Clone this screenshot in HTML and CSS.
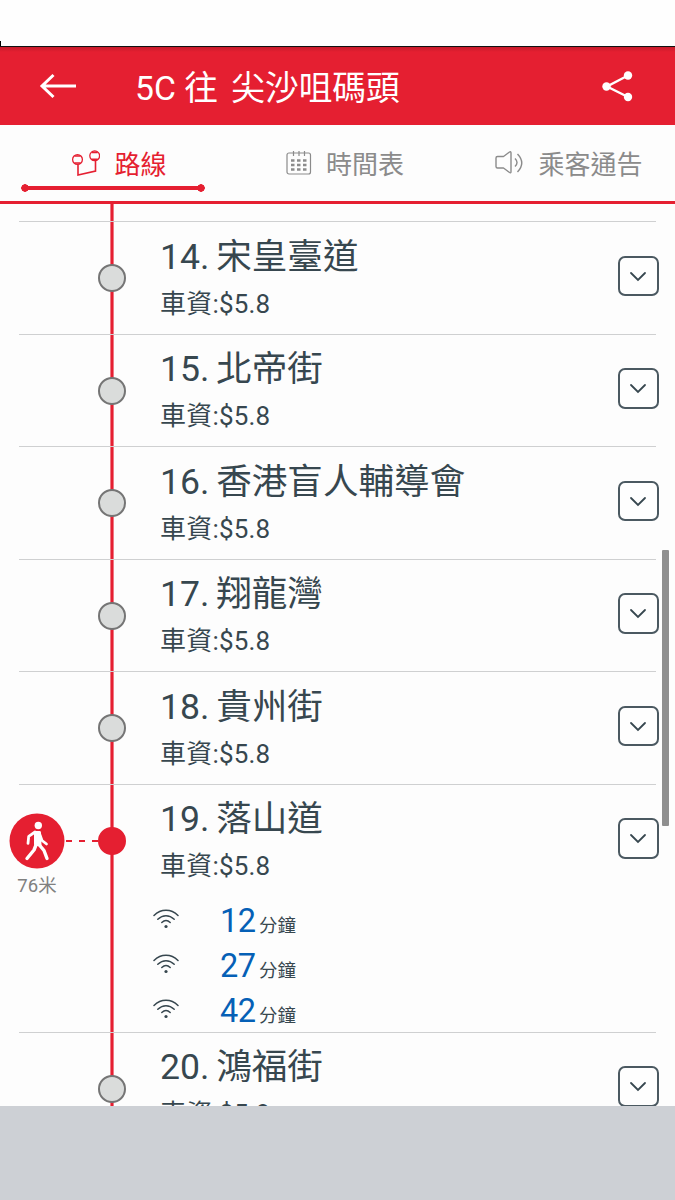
FILE: index.html
```html
<!DOCTYPE html>
<html lang="zh-HK">
  <head>
    <title>5C 往 尖沙咀碼頭</title>
    <meta charset="UTF-8">
    <meta name="viewport" content="width=device-width, initial-scale=1.0">
    <link rel="stylesheet" href="styles.css">
  </head>

  <body>

    <!-- icons used more than once -->
    <svg class="defs">
      <symbol id="chevron" viewBox="0 0 18 12">
        <path d="M2 3l7 7 7-7" fill="none" stroke="currentColor" stroke-width="1.8" stroke-linecap="round"/>
      </symbol>
      <symbol id="signal" viewBox="0 0 26 20">
        <g fill="none" stroke="currentColor" stroke-width="1.5" stroke-linecap="round">
          <path d="M1 6.500C8-.4 18-.4 25 6.500"/>
          <path d="M4.800 10.300c5-4.800 11.400-4.800 16.400 0"/>
          <path d="M8.800 13.500c2.600-2.500 5.800-2.500 8.400 0"/>
        </g>
        <circle cx="13" cy="17.500" r="1.600" fill="currentColor"/>
      </symbol>
    </svg>

    <div class="statusbar"></div>

    <header class="header">
      <svg class="back" width="38" height="26" viewBox="0 0 38 26">
        <path d="M14.500 2L3 13l11.500 11M3 13h34" fill="none" stroke="#fff" stroke-width="3"/>
      </svg>
      <h1 class="title">5C 往 <span>尖沙咀碼頭</span></h1>
      <svg class="share" width="32" height="32" viewBox="0 0 32 32">
        <path d="M26 5.500L5 16.500l21 10.500" fill="none" stroke="#fff" stroke-width="2.400"/>
        <g fill="#fff">
          <circle cx="26" cy="5.500" r="4.200"/>
          <circle cx="4.500" cy="16.500" r="4.200"/>
          <circle cx="26" cy="27" r="4.200"/>
        </g>
      </svg>
    </header>

    <nav class="tabs">
      <a class="tab active">
        <svg width="30" height="27" viewBox="0 0 30 27" fill="none" stroke="currentColor">
          <path d="M8 14.500v10.500l17.500-4V10.500" stroke-width="1.600"/>
          <circle cx="7.500" cy="9.500" r="4.900" stroke-width="1.300"/>
          <circle cx="24.700" cy="5.800" r="4.900" stroke-width="1.300"/>
          <path d="M4.500 6h6M4.500 13h6M21.700 2.300h6M21.700 9.300h6" stroke-width="1.700"/>
        </svg>
        <span>路線</span>
      </a>
      <a class="tab">
        <svg width="26" height="26" viewBox="0 0 26 26" fill="none" stroke="currentColor">
          <rect x="1" y="3" width="23.500" height="21" rx="2" stroke-width="1.200"/>
          <path d="M7.500 1v5M13 1v5M18.500 1v5" stroke-width="1.200"/>
          <path d="M5 10.500h3.500m2.500 0h3.500m2.500 0h3.500M5 15h3.500m2.500 0h3.500m2.500 0h3.500M5 19.500h3.500m2.500 0h3.500m2.500 0h3.500" stroke-width="2.500"/>
        </svg>
        <span>時間表</span>
      </a>
      <a class="tab">
        <svg width="30" height="26" viewBox="0 0 30 26" fill="none" stroke="currentColor" stroke-width="1.400" stroke-linejoin="round">
          <path d="M2 8q0-1.500 1.500-1.500h6l6-4.500q1.500-.8 1.500 1v18.500q0 2-1.500 1l-6-4.500h-6q-1.500 0-1.500-1.500z"/>
          <path d="M21 8.500q4 4 0 8M23.500 4q8.500 9 0 18"/>
        </svg>
        <span>乘客通告</span>
      </a>
    </nav>

    <main class="stops">
      <section class="stop">
        <div class="rail"><span class="dot"></span></div>
        <div class="info">
          <h2 class="name">14. 宋皇臺道</h2>
          <p class="fare">車資:$5.8</p>
        </div>
        <button class="more"><svg><use href="#chevron"/></svg></button>
      </section>

      <section class="stop">
        <div class="rail"><span class="dot"></span></div>
        <div class="info">
          <h2 class="name">15. 北帝街</h2>
          <p class="fare">車資:$5.8</p>
        </div>
        <button class="more"><svg><use href="#chevron"/></svg></button>
      </section>

      <section class="stop">
        <div class="rail"><span class="dot"></span></div>
        <div class="info">
          <h2 class="name">16. 香港盲人輔導會</h2>
          <p class="fare">車資:$5.8</p>
        </div>
        <button class="more"><svg><use href="#chevron"/></svg></button>
      </section>

      <section class="stop">
        <div class="rail"><span class="dot"></span></div>
        <div class="info">
          <h2 class="name">17. 翔龍灣</h2>
          <p class="fare">車資:$5.8</p>
        </div>
        <button class="more"><svg><use href="#chevron"/></svg></button>
      </section>

      <section class="stop">
        <div class="rail"><span class="dot"></span></div>
        <div class="info">
          <h2 class="name">18. 貴州街</h2>
          <p class="fare">車資:$5.8</p>
        </div>
        <button class="more"><svg><use href="#chevron"/></svg></button>
      </section>

      <!-- nearest stop, opened -->
      <section class="stop nearest">
        <div class="rail">
          <div class="walk">
            <svg width="56" height="56" viewBox="0 0 56 56">
              <circle cx="28" cy="28" r="27.500" fill="#e51f31"/>
              <circle cx="29.300" cy="12.500" r="3.700" fill="#fff"/>
              <path d="M26.500 19.500h4L31 32l-4.500-1z" fill="#fff" stroke="#fff" stroke-width="3" stroke-linejoin="round"/>
              <path d="M26 19l-6.300 4.300-.7 7M31 22l2 5.500 4.500 3.500" fill="none" stroke="#fff" stroke-width="2.800" stroke-linecap="round" stroke-linejoin="round"/>
              <path d="M27 32l-2 5-7 8.500M30 31.500l5 6 3 8" fill="none" stroke="#fff" stroke-width="3.400" stroke-linecap="round" stroke-linejoin="round"/>
            </svg>
            <span>76米</span>
          </div>
          <svg class="dash" width="34" height="2"><path d="M1 1h33" stroke="#e51f31" stroke-width="2" stroke-dasharray="6 7"/></svg>
          <span class="dot"></span>
        </div>
        <div class="info">
          <h2 class="name">19. 落山道</h2>
          <p class="fare">車資:$5.8</p>
          <ul class="times">
            <li><svg><use href="#signal"/></svg><b>12</b><span>分鐘</span></li>
            <li><svg><use href="#signal"/></svg><b>27</b><span>分鐘</span></li>
            <li><svg><use href="#signal"/></svg><b>42</b><span>分鐘</span></li>
          </ul>
        </div>
        <button class="more"><svg><use href="#chevron"/></svg></button>
      </section>

      <section class="stop">
        <div class="rail"><span class="dot"></span></div>
        <div class="info">
          <h2 class="name">20. 鴻福街</h2>
          <p class="fare">車資:$5.8</p>
        </div>
        <button class="more"><svg><use href="#chevron"/></svg></button>
      </section>

      <div class="scrollbar"></div>
    </main>

    <footer class="footer"></footer>

  </body>
</html>
```
FILE: styles.css
```css
* {
  box-sizing: border-box;
}

body {
  display: flex;
  flex-direction: column;
  height: 1200px;
  margin: 0;
  overflow: hidden;
  background: #fdfdfd;
  color: #37474f;
  font-family: Roboto, "Noto Sans CJK TC", sans-serif;
}

h1, h2, p, ul {
  margin: 0;
  padding: 0;
  font-weight: 400;
}

svg {
  display: block;
  flex: none;
}

.defs {
  display: none;
}

.statusbar {
  flex: none;
  height: 47px;
  background: linear-gradient(#000, #000) 0 100% / 1px 5px no-repeat #fefefe;
  border-bottom: 1px solid #111;
}

/* red title bar */
.header {
  display: flex;
  flex: none;
  align-items: center;
  height: 78px;
  padding: 0 41px 0 39px;
  background: linear-gradient(#c61b2a, #e51f31 5px);
  color: #fff;
}

.title {
  flex: 1;
  margin-left: 58px;
  padding-top: 5px;
  font-size: 33.7px;
  line-height: 78px;
  white-space: nowrap;
}

.title span {
  margin-left: 5px;
}

/* tabs */
.tabs {
  display: grid;
  grid-template-columns: 225px 225px 225px;
  flex: none;
  height: 79px;
  border-bottom: 3px solid #e51f31;
  color: #8b8b8b;
  font-size: 26px;
}

.tab {
  position: relative;
  display: flex;
  justify-content: center;
  gap: 14px;
  height: 76px;
  line-height: 80px;
  white-space: nowrap;
}

.tab svg {
  margin-top: 25px;
}

.tab:nth-child(2) {
  padding-left: 15px;
}

.tab:nth-child(3) {
  padding-left: 12px;
}

.tab.active {
  padding-left: 12px;
  color: #e51f31;
}

.active::after {
  content: "";
  position: absolute;
  left: 21px;
  bottom: 9px;
  width: 184px;
  height: 8px;
  background:
    radial-gradient(circle at 4px 4px, #e51f31 3.5px, transparent 4px),
    radial-gradient(circle at 180px 4px, #e51f31 3.5px, transparent 4px),
    linear-gradient(#e51f31, #e51f31) 4px 2px / 176px 4px no-repeat;
}

/* list of stops, the route line runs behind all of them */
.stops {
  position: relative;
  flex: 1;
  min-height: 0;
  padding: 17px 17px 0 19px;
  overflow: hidden;
  background: linear-gradient(90deg, #f07884 1px, #e51f31 1px 3px, #f07884 3px) 110px 0 / 4px 100% no-repeat;
}

.stop {
  display: grid;
  grid-template-columns: 141px 1fr 40px;
  height: 112.5px;
  background: linear-gradient(#cfd0d1, #cfd0d1) 0 0 / 637px 1px no-repeat;
}

.nearest {
  height: 248px;
}

.rail {
  position: relative;
  height: 112px;
}

.dot {
  display: block;
  width: 28px;
  height: 28px;
  margin: 43px 0 0 79px;
  border: 2px solid #757575;
  border-radius: 50%;
  background: #dadcdb;
}

.nearest .dot {
  border-color: #e51f31;
  background: #e51f31;
}

.walk {
  position: absolute;
  top: 29px;
  left: -10px;
  width: 56px;
  color: #808080;
  font-size: 18.5px;
  line-height: 34px;
  text-align: center;
}

.dash {
  position: absolute;
  top: 56px;
  left: 46px;
}

.info {
  padding-top: 12.5px;
}

.name {
  font-size: 35.6px;
  line-height: 46px;
  word-spacing: -2px;
  white-space: nowrap;
}

.fare {
  font-size: 26px;
  letter-spacing: 0.2px;
  line-height: 48px;
}

.more {
  display: flex;
  align-items: center;
  justify-content: center;
  width: 40.5px;
  height: 40.5px;
  margin-top: 34.5px;
  padding: 0;
  border: 2px solid #4b5961;
  border-radius: 7px;
  background: #fefefe;
  color: #37474f;
}

.more svg {
  width: 18px;
  height: 12px;
}

/* arrivals */
.times {
  padding-top: 8px;
  list-style: none;
}

.times li {
  display: flex;
  align-items: baseline;
  height: 45px;
  line-height: 46px;
}

.times svg {
  align-self: flex-start;
  width: 26px;
  height: 20px;
  margin: 11px 41px 0 -7px;
}

.times b {
  width: 39px;
  color: #0560b6;
  font-size: 32.5px;
  font-weight: 400;
  letter-spacing: -0.4px;
}

.times span {
  font-size: 18.5px;
}

.scrollbar {
  position: absolute;
  top: 346px;
  right: 6px;
  width: 7px;
  height: 276px;
  border-radius: 1px;
  background: #8f8f8f;
}

.footer {
  flex: none;
  height: 94px;
  background: #cdd0d5;
}
```
